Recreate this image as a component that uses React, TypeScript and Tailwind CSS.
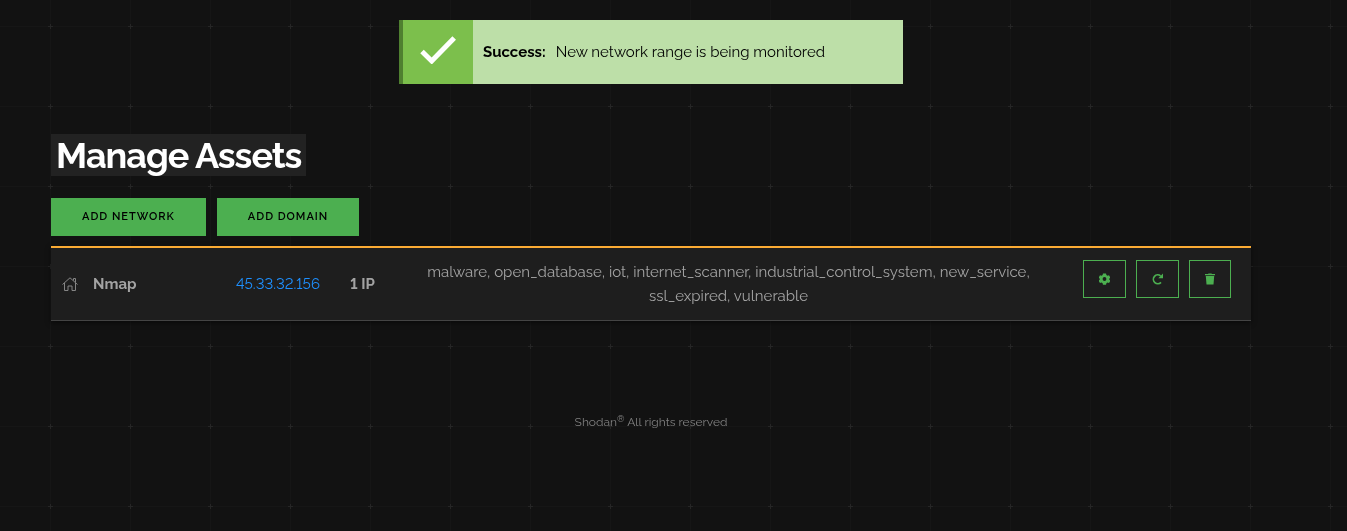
import type { ReactNode } from 'react';

function GridBackdrop() {
  return (
    <svg className="pointer-events-none fixed inset-0 -z-10 h-full w-full" aria-hidden="true">
      <defs>
        <pattern id="grid" x="50" y="26" width="80" height="80" patternUnits="userSpaceOnUse" patternTransform="translate(-40 -40)">
          <path d="M40 0h1v80h-1zM0 40h80v1H0z" fill="#161616" />
          <path d="M38 40h5v1h-5zM40 38h1v5h-1z" fill="#262626" />
        </pattern>
      </defs>
      <rect width="100%" height="100%" fill="url(#grid)" />
    </svg>
  );
}

function CheckIcon() {
  return (
    <svg width="36" height="28" viewBox="0 0 36 28" fill="none" className="-mt-1" aria-hidden="true">
      <path d="M2 15.500 11.700 25 34.200 2" stroke="#fff" strokeWidth="5" />
    </svg>
  );
}

function HomeIcon() {
  return (
    <svg width="16" height="14" viewBox="0 0 16 14" fill="none" stroke="#858585" aria-hidden="true">
      <path d="M.5 7.500 8 .8l7.500 6.700M2.500 6v7.500h3.500V9h4v4.500h3.500V6M11.500 3.500v-2h2V5.500" />
    </svg>
  );
}

function GearIcon() {
  return (
    <svg width="11" height="12" viewBox="0 0 11 12" aria-hidden="true">
      <path
        d="M4 .5h3l.4 1.600 1 .6 1.600-.500 1.400 2.400-1.200 1.100v.9l1.200 1.100-1.400 2.400-1.600-.500-1 .6-.4 1.600H4l-.4-1.600-1-.6-1.600.5L-.4 7.700.8 6.600v-.9L-.4 4.600 1 2.200l1.600.5 1-.6z M5.500 4.100a1.900 1.900 0 1 0 0 3.800 1.900 1.900 0 1 0 0-3.800z"
        fill="currentColor"
        fillRule="evenodd"
      />
    </svg>
  );
}

function RefreshIcon() {
  return (
    <svg width="11" height="12" viewBox="0 0 11 12" aria-hidden="true">
      <path d="M9 9.300A4.400 4.400 0 1 1 8.600 2.900" fill="none" stroke="currentColor" strokeWidth="1.700" />
      <path d="M11 .5v4.700H6.300z" fill="currentColor" />
    </svg>
  );
}

function TrashIcon() {
  return (
    <svg width="10" height="12" viewBox="0 0 10 12" aria-hidden="true">
      <path d="M0 1h3l.500-.600h3L7 1h3v1.200H0zM.8 3h8.400l-.7 8.500h-7z" fill="currentColor" />
    </svg>
  );
}

function PrimaryButton({ children }: { children: ReactNode }) {
  return (
    <button type="button" className="h-[38px] cursor-pointer bg-[#4caf50] px-[31px] text-[11px] font-semibold tracking-[1px] text-black uppercase">
      {children}
    </button>
  );
}

function ActionButton({ label, children }: { label: string; children: ReactNode }) {
  return (
    <button type="button" aria-label={label} className="flex h-[38px] cursor-pointer items-center justify-center border border-[#4caf50] px-[15px] text-[#4caf50]">
      {children}
    </button>
  );
}

export default function App() {
  return (
    <div className="isolate min-h-screen bg-[#121212] pr-[45px] font-['Raleway','Lato',sans-serif] text-[15px] leading-6 text-[#a3a3a3] lining-nums">
      <GridBackdrop />
      <main className="mx-auto max-w-[1200px] pt-5">
        <div role="status" className="mx-auto flex h-16 w-[504px] max-w-full border-l-4 border-[#4f7f30] bg-[#bddfa8] text-black">
          <div className="flex w-[70px] shrink-0 items-center justify-center bg-[#7cbf4c]">
            <CheckIcon />
          </div>
          <p className="flex items-center gap-2.5 px-2.5">
            <strong>Success:</strong>
            <span>New network range is being monitored</span>
          </p>
        </div>

        <h1 className="mt-[50px] w-fit bg-[#222] px-[5px] text-[36px] leading-[42px] font-bold tracking-[-1px] text-white">Manage Assets</h1>

        <div className="mt-[22px] flex gap-[11px]">
          <PrimaryButton>Add Network</PrimaryButton>
          <PrimaryButton>Add Domain</PrimaryButton>
        </div>

        <table className="mt-2.5 w-full border-t-2 border-[#fbab34] bg-[#1e1e1e] shadow-[0_2px_5px_rgba(0,0,0,0.5)]">
          <tbody>
            <tr className="border-b border-[#444]">
              <td className="w-[42px] pl-[11px]"><HomeIcon /></td>
              <td className="w-[134px] font-bold">Nmap</td>
              <td className="w-[102px] text-center"><a href="#host" className="text-[#1e90ff]">45.33.32.156</a></td>
              <td className="w-[67px] text-center font-bold">1 IP</td>
              <td className="px-6 py-3 text-center">
                malware, open_database, iot, internet_scanner, industrial_control_system, new_service, ssl_expired, vulnerable
              </td>
              <td className="w-[190px] py-3 pr-5">
                <div className="mb-2.5 flex justify-end gap-2.5">
                  <ActionButton label="Settings"><GearIcon /></ActionButton>
                  <ActionButton label="Rescan"><RefreshIcon /></ActionButton>
                  <ActionButton label="Delete"><TrashIcon /></ActionButton>
                </div>
              </td>
            </tr>
          </tbody>
        </table>
      </main>
      <footer className="mt-[89px] text-center text-xs leading-6 text-[#808080]">
        Shodan<sup className="text-[9px]">®</sup> All rights reserved
      </footer>
    </div>
  );
}
